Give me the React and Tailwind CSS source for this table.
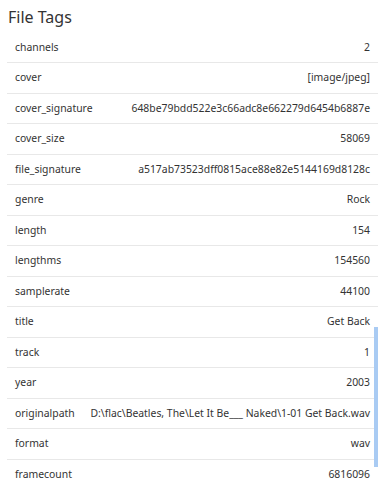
const tags = [
  ['channels', '2'],
  ['cover', '[image/jpeg]'],
  ['cover_signature', '648be79bdd522e3c66adc8e662279d6454b6887e'],
  ['cover_size', '58069'],
  ['file_signature', 'a517ab73523dff0815ace88e82e5144169d8128c'],
  ['genre', 'Rock'],
  ['length', '154'],
  ['lengthms', '154560'],
  ['samplerate', '44100'],
  ['title', 'Get Back'],
  ['track', '1'],
  ['year', '2003'],
  ['originalpath', 'D:\\flac\\Beatles, The\\Let It Be___ Naked\\1-01 Get Back.wav'],
  ['format', 'wav'],
  ['framecount', '6816096'],
]

export default function App() {
  return (
    <div
      className="relative h-[500px] w-[387px] overflow-hidden bg-white text-[#333]"
      style={{ fontFamily: '"Noto Sans", sans-serif' }}
    >
      <h1 className="px-2 pt-[5px] h-[32.5px] text-[16px] leading-[24px] text-[#333]">File Tags</h1>
      <div className="mx-[7px] w-[371px]">
        {tags.map(([key, value], i) => (
          <div
            key={key}
            className={`flex h-[30.5px] items-center justify-between gap-2 px-2 pt-px text-[10.4px] ${
              i < tags.length - 1 ? 'border-b border-[#e8e8e8]' : ''
            }`}
          >
            <span className="whitespace-nowrap">{key}</span>
            <span className="whitespace-nowrap">{value}</span>
          </div>
        ))}
      </div>
      <div className="absolute left-[374px] top-[327px] h-[140px] w-[4px] bg-[#a9cbf3]" />
    </div>
  )
}
